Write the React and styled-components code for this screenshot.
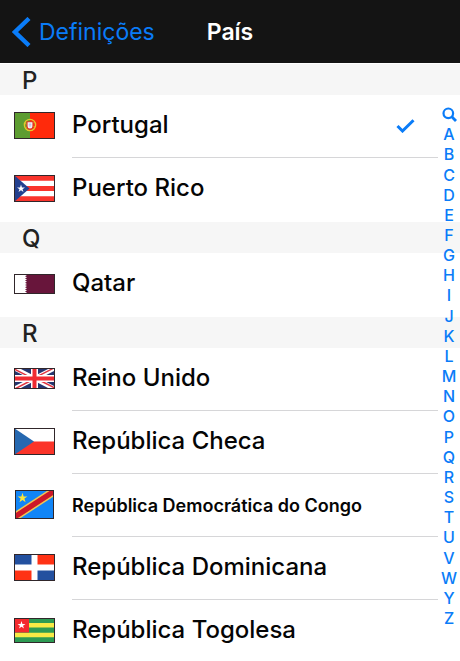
import React from "react";
import styled, { createGlobalStyle } from "styled-components";

const GlobalStyle = createGlobalStyle`
  *, *::before, *::after { box-sizing: border-box; }
  body { margin: 0; background: #fff; }
  body, button { font-family: Inter, "Liberation Sans", sans-serif; }
`;

const BLUE = "#0a7cf8";

const Screen = styled.div`
  height: 100vh;
  display: flex;
  flex-direction: column;
  color: #050505;
`;

const NavBar = styled.header`
  flex: none;
  height: 63px;
  padding: 0 12px;
  display: grid;
  grid-template-columns: 1fr auto 1fr;
  align-items: center;
  background: #141414;
`;

const BackButton = styled.button`
  justify-self: start;
  display: flex;
  align-items: center;
  gap: 8px;
  padding: 0;
  border: 0;
  background: none;
  color: ${BLUE};
  font-size: 23px;
  line-height: 32px;
  cursor: pointer;
`;

const Title = styled.h1`
  margin: 0;
  color: #fff;
  font-size: 23px;
  line-height: 32px;
  font-weight: 600;
`;

const Body = styled.main`
  position: relative;
  flex: 1;
  min-height: 0;
`;

const Scroller = styled.div`
  height: 100%;
  overflow-y: auto;
  scrollbar-width: none;
`;

const SectionTitle = styled.h2`
  margin: 0;
  padding: 2px 22px 0;
  border-top: 1px solid #fff;
  background: #f6f6f6;
  color: #222;
  font-size: 24px;
  line-height: 29px;
  font-weight: 500;
`;

const List = styled.ul`
  margin: 0;
  padding: 0;
  list-style: none;
`;

const Row = styled.button`
  width: 100%;
  height: 63px;
  padding: 0 22px 0 14px;
  display: grid;
  grid-template-columns: 41px 1fr;
  column-gap: 17px;
  align-items: stretch;
  border: 0;
  background: none;
  color: inherit;
  text-align: left;
  cursor: pointer;
`;

const FlagCell = styled.span`
  display: flex;
  align-items: center;
  justify-content: center;
  padding-bottom: 2px;
`;

const Content = styled.span`
  display: flex;
  align-items: center;
  justify-content: space-between;
  padding-right: 23px;
  border-bottom: 1px solid ${(p) => (p.$last ? "transparent" : "#d6d6d8")};
`;

const Name = styled.span`
  padding-bottom: ${(p) => (p.$compact ? 0 : 4)}px;
  font-size: ${(p) => (p.$compact ? 18 : 24)}px;
  font-weight: ${(p) => (p.$compact ? 600 : 500)};
  white-space: nowrap;
`;

const IndexBar = styled.nav`
  position: absolute;
  top: 41px;
  right: 0;
  bottom: 33px;
  width: 22px;
  display: flex;
  flex-direction: column;
`;

const IndexLink = styled.a`
  flex: 1;
  display: flex;
  align-items: center;
  justify-content: center;
  color: ${BLUE};
  font-size: 16px;
  line-height: 20px;
  font-weight: 500;
  text-decoration: none;
`;

const FlagSvg = styled.svg`
  display: block;
`;

const STAR = "0,-10 2.25,-3.09 9.51,-3.09 3.63,1.18 5.88,8.09 0,3.82 -5.88,8.09 -3.63,1.18 -9.51,-3.09 -2.25,-3.09";

function Star({ x, y, r, fill }) {
  return <polygon points={STAR} fill={fill} transform={`translate(${x} ${y}) scale(${r / 10})`} />;
}

function Flag({ w = 41, h = 27, children }) {
  return (
    <FlagSvg width={w} height={h} viewBox={`0 0 ${w} ${h}`} aria-hidden="true">
      {children}
      <rect x=".5" y=".5" width={w - 1} height={h - 1} fill="none" stroke="#30262a" />
    </FlagSvg>
  );
}

const flags = {
  pt: (
    <Flag>
      <rect width="41" height="27" fill="#ff2a0b" />
      <rect width="16" height="27" fill="#5d9c31" />
      <circle cx="16" cy="13" r="5.6" fill="none" stroke="#e5c72b" strokeWidth="1.4" />
      <path d="M11 11.5 21 15M12 16 20 10" stroke="#e5c72b" strokeWidth=".7" />
      <path d="M12.4 9.2h7.2v5a3.6 3.6 0 0 1-7.2 0z" fill="#e33a26" />
      <path d="M13.6 10.2h4.8v4a2.4 2.4 0 0 1-4.8 0z" fill="#f3edf5" />
      <path d="M16 11v4M14.6 12.8h2.8" stroke="#a9add4" strokeWidth=".7" />
    </Flag>
  ),
  pr: (
    <Flag>
      <rect width="41" height="27" fill="#fff" />
      <path d="M0 3.2h41M0 13.5h41M0 23.8h41" stroke="#f9342c" strokeWidth="5.2" />
      <path d="M0 0 15.5 13.5 0 27z" fill="#23408f" />
      <Star x={7} y={13.7} r={4.2} fill="#fff" />
    </Flag>
  ),
  qa: (
    <Flag h={20}>
      <rect width="41" height="20" fill="#fff" />
      <path
        d="M41 0H11l2 1.1-2 1.1 2 1.1-2 1.1 2 1.1-2 1.1 2 1.1-2 1.1 2 1.1-2 1.1 2 1.1-2 1.1 2 1.1-2 1.1 2 1.1-2 1.1 2 1.1-2 1.3H41z"
        fill="#68153b"
      />
    </Flag>
  ),
  gb: (
    <Flag h={21}>
      <rect width="41" height="21" fill="#25356f" />
      <path d="M0 0 41 21M41 0 0 21" stroke="#fff" strokeWidth="4.6" />
      <path d="M0 .9 19 10.6M22 10.5 41 20.2M41-.5 22 9.2M19 11.5 0 21.3" stroke="#e23440" strokeWidth="1.5" />
      <path d="M20.5 0v21M0 10.5h41" stroke="#fff" strokeWidth="7" />
      <path d="M20.5 0v21M0 10.5h41" stroke="#f02b32" strokeWidth="4" />
    </Flag>
  ),
  cz: (
    <Flag>
      <rect width="41" height="27" fill="#fff" />
      <path d="M0 13.5h41V27H0z" fill="#fb3429" />
      <path d="M0 0 20 13.5 0 27z" fill="#2668b0" />
    </Flag>
  ),
  cd: (
    <Flag w={39} h={29}>
      <rect width="39" height="29" fill="#1185f7" />
      <path d="M-2 28 41 0" stroke="#f0c552" strokeWidth="8.4" />
      <path d="M-2 28 41 0" stroke="#cd1728" strokeWidth="5.4" />
      <Star x={7.5} y={8} r={5.2} fill="#f9e53d" />
    </Flag>
  ),
  dom: (
    <Flag>
      <rect width="41" height="27" fill="#fff" />
      <path d="M0 0h17.5v10.5H0zM23.5 16.5H41V27H23.5z" fill="#23509f" />
      <path d="M23.5 0H41v10.5H23.5zM0 16.5h17.5V27H0z" fill="#ff3215" />
    </Flag>
  ),
  tg: (
    <Flag h={25}>
      <rect width="41" height="25" fill="#2d9b53" />
      <path d="M0 7.3h41M0 17h41" stroke="#f8ea45" strokeWidth="4.6" />
      <rect width="15" height="14.5" fill="#f42a2e" />
      <Star x={7.5} y={7.2} r={4.2} fill="#fff" />
    </Flag>
  ),
};

const sections = [
  {
    letter: "P",
    countries: [
      { name: "Portugal", flag: "pt", selected: true },
      { name: "Puerto Rico", flag: "pr" },
    ],
  },
  { letter: "Q", countries: [{ name: "Qatar", flag: "qa" }] },
  {
    letter: "R",
    countries: [
      { name: "Reino Unido", flag: "gb" },
      { name: "República Checa", flag: "cz" },
      { name: "República Democrática do Congo", flag: "cd", compact: true },
      { name: "República Dominicana", flag: "dom" },
      { name: "República Togolesa", flag: "tg" },
    ],
  },
];

const letters = "ABCDEFGHIJKLMNOPQRSTUVWYZ".split("");

function Chevron() {
  return (
    <svg width="19" height="30" viewBox="0 0 19 30" fill="none" aria-hidden="true">
      <path d="M17 1.5 3 15l14 13.5" stroke={BLUE} strokeWidth="4.4" />
    </svg>
  );
}

function Check() {
  return (
    <svg width="19" height="14" viewBox="0 0 19 14" fill="none" aria-hidden="true">
      <path d="M1.5 7 6.5 12 17.5 1.2" stroke={BLUE} strokeWidth="3" />
    </svg>
  );
}

function SearchIcon() {
  return (
    <svg width="15" height="15" viewBox="0 0 15 15" fill="none" aria-hidden="true">
      <circle cx="6.3" cy="6.3" r="4.8" stroke={BLUE} strokeWidth="2.2" />
      <path d="m9.8 9.8 4.2 4.2" stroke={BLUE} strokeWidth="2.8" />
    </svg>
  );
}

export default function App() {
  return (
    <Screen>
      <GlobalStyle />
      <NavBar>
        <BackButton type="button">
          <Chevron />
          Definições
        </BackButton>
        <Title>País</Title>
      </NavBar>
      <Body>
        <Scroller>
          {sections.map(({ letter, countries }) => (
            <section key={letter} id={letter}>
              <SectionTitle>{letter}</SectionTitle>
              <List>
                {countries.map((c, i) => (
                  <li key={c.name}>
                    <Row type="button" aria-pressed={Boolean(c.selected)}>
                      <FlagCell>{flags[c.flag]}</FlagCell>
                      <Content $last={i === countries.length - 1}>
                        <Name $compact={c.compact}>{c.name}</Name>
                        {c.selected && <Check />}
                      </Content>
                    </Row>
                  </li>
                ))}
              </List>
            </section>
          ))}
        </Scroller>
        <IndexBar aria-label="Índice">
          <IndexLink href="#search" aria-label="Pesquisar">
            <SearchIcon />
          </IndexLink>
          {letters.map((l) => (
            <IndexLink key={l} href={`#${l}`}>
              {l}
            </IndexLink>
          ))}
        </IndexBar>
      </Body>
    </Screen>
  );
}
